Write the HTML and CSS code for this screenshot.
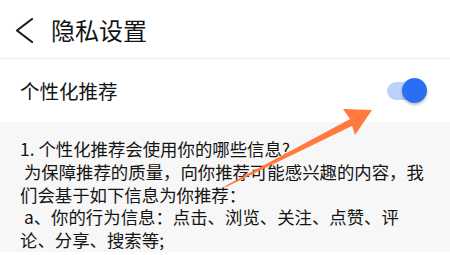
FILE: index.html
```html
<!DOCTYPE html>
<html lang="zh-CN">
<head>
    <meta charset="UTF-8" />
    <meta name="viewport" content="width=device-width, initial-scale=1" />
    <title>隐私设置</title>
    <link rel="stylesheet" href="styles.css">
</head>
<body>
    <header class="top-bar">
        <svg class="back" width="20" height="28" viewBox="0 0 20 28" aria-label="返回">
            <polyline points="17,2 2,13.5 17,25" fill="none" stroke="#1a1a1a" stroke-width="2.2" stroke-linecap="round" stroke-linejoin="round"/>
        </svg>
        <h1>隐私设置</h1>
    </header>

    <div class="setting-row">
        <span>个性化推荐</span>
        <div class="switch on" role="switch" aria-checked="true">
            <span class="track"></span>
            <span class="knob"></span>
        </div>
    </div>

    <div class="info">
        <p>1. 个性化推荐会使用你的哪些信息?</p>
        <p>&nbsp;为保障推荐的质量，向你推荐可能感兴趣的内容，我们会基于如下信息为你推荐：</p>
        <p>&nbsp;a、你的行为信息：点击、浏览、关注、点赞、评论、分享、搜索等;</p>
    </div>

    <svg class="arrow" width="450" height="255" viewBox="0 0 450 255">
        <polygon points="224,188 226,185.5 352,118 356,124" fill="#ff7a3c"/>
        <polygon points="372,110 343,109 350,119 355,135" fill="#ff7a3c"/>
    </svg>
</body>
</html>
```

FILE: styles.css
```css
body {
    margin: 0;
    background: #fff;
    color: #141414;
    font-family: "Noto Sans CJK SC", "Noto Sans", sans-serif;
    position: relative;
    height: 255px;
    overflow: hidden;
}
.top-bar {
    display: flex;
    align-items: center;
    height: 59px;
    padding-left: 15px;
    border-bottom: 1px solid #eeeeee;
    box-sizing: border-box;
}
.top-bar .back {
    margin-top: 4px;
}
.top-bar h1 {
    margin: 2px 0 0 16px;
    font-size: 24px;
    font-weight: 400;
    line-height: 1;
}
.setting-row {
    display: flex;
    align-items: center;
    justify-content: space-between;
    height: 63px;
    padding: 0 23px 0 20px;
    font-size: 19.5px;
}
.switch {
    position: relative;
    width: 40px;
    height: 26px;
}
.switch .track {
    position: absolute;
    left: 0;
    top: 4px;
    width: 36px;
    height: 18px;
    border-radius: 9px;
    background: #bdd1fb;
}
.switch .knob {
    position: absolute;
    right: 0;
    top: 0;
    width: 25px;
    height: 25px;
    border-radius: 50%;
    background: #2a6ff3;
    box-shadow: 0 2px 3px rgba(0, 0, 0, 0.25);
}
.info {
    background: #f7f7f7;
    padding: 16px 20px 0 20px;
    font-size: 17.4px;
    line-height: 22.8px;
}
.info p {
    margin: 0;
}
.arrow {
    position: absolute;
    left: 0;
    top: 0;
    pointer-events: none;
}
```
